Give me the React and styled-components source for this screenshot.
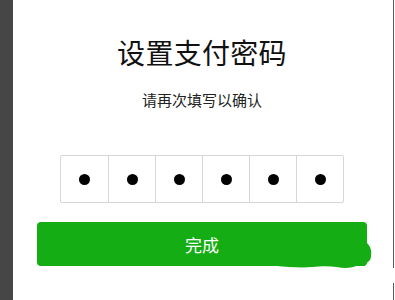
import React from "react";
import styled, { createGlobalStyle } from "styled-components";

const Global = createGlobalStyle`
  html, body { margin: 0; padding: 0; background: #fff; }
  body { font-family: "Noto Sans CJK SC", "Liberation Sans", sans-serif; }
`;

const Page = styled.div`
  display: flex;
  width: 395px;
  height: 300px;
  overflow: hidden;
`;

const SideStrip = styled.div`
  width: 13px;
  flex: none;
  background: #464646;
`;

const Main = styled.div`
  flex: 1;
  display: flex;
  flex-direction: column;
  align-items: center;
  padding: 0 26px 0 24px;
  background: #fff;
`;

const EdgeLine = styled.div`
  width: 1px;
  flex: none;
  margin-right: 1px;
  background: linear-gradient(#5a5a5a 0 268px, transparent 268px 283px, #5a5a5a 283px);
`;

const Title = styled.h1`
  margin: 33px 0 0;
  font-size: 28px;
  font-weight: 400;
  line-height: 38px;
  color: #111;
  letter-spacing: 0.3px;
`;

const Subtitle = styled.p`
  margin: 19px 0 0;
  font-size: 15px;
  line-height: 20px;
  color: #222;
`;

const CodeRow = styled.div`
  margin-top: 45px;
  display: grid;
  grid-template-columns: repeat(6, 1fr);
  width: 284px;
  height: 48px;
  box-sizing: border-box;
  border: 1px solid #d6d6d6;
  border-radius: 2px;
`;

const Cell = styled.div`
  display: flex;
  align-items: center;
  justify-content: center;
  border-left: ${(p) => (p.$first ? "none" : "1px solid #d6d6d6")};
`;

const Dot = styled.span`
  width: 11px;
  height: 11px;
  border-radius: 50%;
  background: #000;
`;

const ButtonWrap = styled.div`
  position: relative;
  margin-top: 19px;
  align-self: stretch;
`;

const DoneButton = styled.button`
  width: 100%;
  height: 44px;
  display: flex;
  align-items: center;
  justify-content: center;
  border: none;
  border-radius: 4px;
  background: #14ad14;
  color: #fff;
  font-family: "Noto Sans CJK SC", "Liberation Sans", sans-serif;
  font-size: 17px;
  padding: 0;
`;

const Smudge = styled.svg`
  position: absolute;
  left: 230px;
  top: 14px;
  pointer-events: none;
`;

export default function App() {
  const cells = [0, 1, 2, 3, 4, 5];
  return (
    <>
      <Global />
      <Page>
        <SideStrip />
        <Main>
          <Title>设置支付密码</Title>
          <Subtitle>请再次填写以确认</Subtitle>
          <CodeRow>
            {cells.map((i) => (
              <Cell key={i} $first={i === 0}>
                <Dot />
              </Cell>
            ))}
          </CodeRow>
          <ButtonWrap>
            <DoneButton>完成</DoneButton>
            <Smudge width="110" height="40" viewBox="0 0 110 40">
              <path
                d="M10 30 C 20 31, 35 32, 45 31 C 55 30, 62 30, 70 31 C 78 33, 85 32, 92 29 C 100 28, 104 25, 104 20 C 105 14, 103 10, 100 7 L 98 7 L 98 30 Z"
                fill="#14ad14"
              />
            </Smudge>
          </ButtonWrap>
        </Main>
        <EdgeLine />
      </Page>
    </>
  );
}
